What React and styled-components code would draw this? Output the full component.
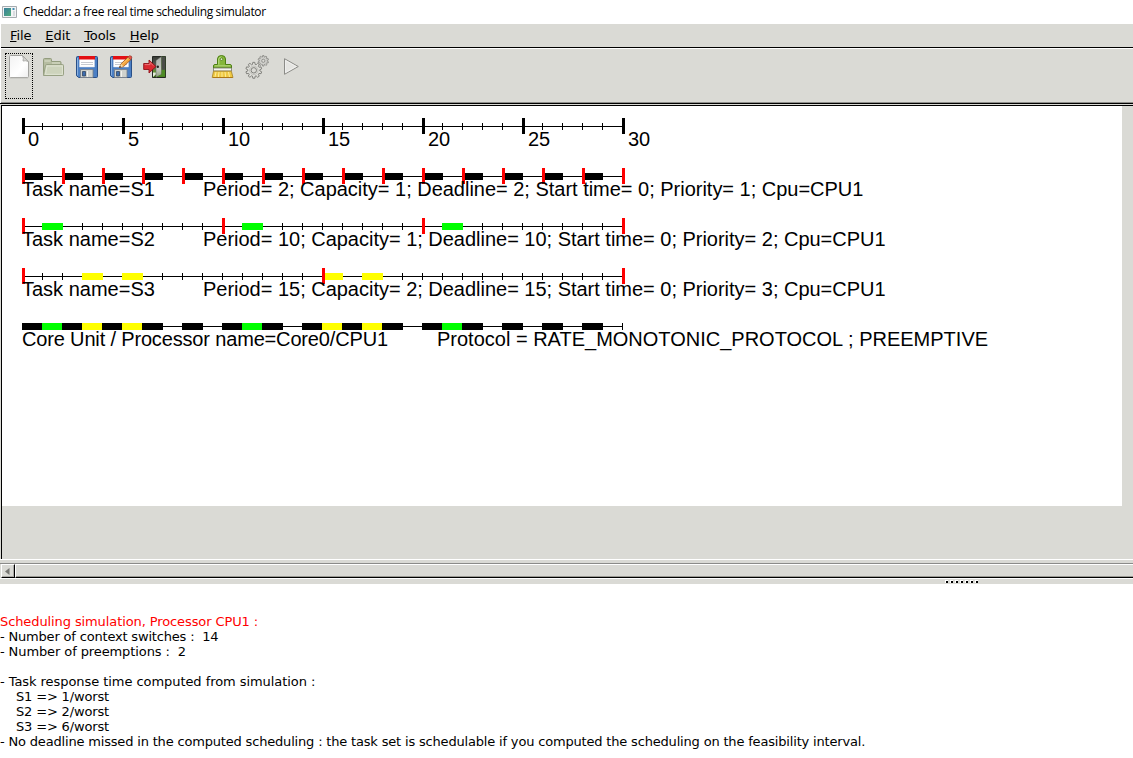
import React from 'react';
import styled, { createGlobalStyle } from 'styled-components';

const GREY = '#dadad5';

const GlobalStyle = createGlobalStyle`
  * { box-sizing: border-box; }
  body { margin: 0; background: #fff; overflow: hidden; }
  svg { display: block; }
`;

const Window = styled.div`
  width: 1133px;
  height: 758px;
  display: flex;
  flex-direction: column;
  overflow: hidden;
  background: #fff;
  color: #000;
  font: 13px "DejaVu Sans", sans-serif;
`;

const TitleBar = styled.header`
  height: 24px;
  flex: none;
  display: flex;
  align-items: center;
  gap: 6px;
  padding: 0 0 1px 2px;
  font: 12px "Open Sans", "Noto Sans", sans-serif;
  letter-spacing: -0.35px;
`;

const MenuBar = styled.nav`
  height: 24px;
  flex: none;
  display: flex;
  align-items: center;
  margin-left: 1px;
  padding: 0 0 0 9px;
  gap: 14px;
  background: ${GREY};
  border-bottom: 1px solid #000;
`;

const MenuItem = styled.span`
  line-height: 22px;
  letter-spacing: -0.1px;
  &::first-letter { text-decoration: underline; }
`;

const ToolBar = styled.div`
  height: 55px;
  flex: none;
  display: flex;
  align-items: flex-start;
  gap: 6px;
  margin-left: 1px;
  padding: 4px 0 0 4px;
  background: ${GREY};
  border-top: 1px solid #fff;
  border-bottom: 1px solid #8e8e8a;
`;

const ToolButton = styled.div`
  width: 28px;
  height: 46px;
  padding: 1px 1px 0;
  border: 1px dotted ${p => (p.$focused ? '#000' : 'transparent')};
`;

const ToolGap = styled.div`
  width: 28px;
`;

const Viewport = styled.main`
  height: 457px;
  flex: none;
  background: ${GREY};
  border-top: 1px solid #000;
  border-bottom: 1px solid #fff;
`;

const ViewportEdge = styled.div`
  height: 454px;
  margin: 1px 0 0 1px;
  border-top: 1px solid #000;
  border-left: 1px solid #000;
`;

const Canvas = styled.section`
  width: 1120px;
  height: 400px;
  padding: 12px 0 0 20px;
  background: #fff;
`;

const Row = styled.div`
  height: 50px;
`;

const Label = styled.div`
  display: flex;
  height: 22px;
  margin-top: -7px;
  font: 20px/22px "Liberation Sans", Arial, sans-serif;
  white-space: pre;
`;

const Name = styled.span`
  width: ${p => p.$width}px;
  flex: none;
  letter-spacing: ${p => p.$spacing || 0}px;
`;

const Details = styled.span`
  letter-spacing: ${p => p.$spacing || 0}px;
`;

const Mark = styled.span`
  width: 100px;
  flex: none;
  padding-left: 6px;
`;

const ScrollArea = styled.div`
  height: 19px;
  flex: none;
  padding-top: 3px;
  background: ${GREY};
`;

const ScrollTrack = styled.div`
  height: 16px;
  display: flex;
  border-top: 1px solid #8b8b89;
  border-bottom: 1px solid #fff;
`;

const ScrollArrow = styled.div`
  width: 14px;
  margin-left: 1px;
  padding: 3px 0 0 3px;
  border: 1px solid #fff;
  border-right: 1px solid #000;
  border-bottom: 1px solid #000;
  box-shadow: inset -1px -1px #aaa9a5;
`;

const ScrollThumb = styled.div`
  flex: 1;
  border: 1px solid #fff;
  border-right: 0;
  border-bottom: 1px solid #000;
  box-shadow: inset 0 -1px #9a9993;
`;

const Splitter = styled.div`
  height: 5px;
  flex: none;
  display: flex;
  gap: 2px;
  padding: 1px 0 0 945px;
  background: ${GREY};
`;

const Dot = styled.i`
  width: 3px;
  height: 3px;
  background: #000;
  border-left: 1px solid #fff;
  border-top: 1px solid #fff;
`;

const Log = styled.section`
  padding-top: 30px;
`;

const LogLine = styled.div`
  height: 15px;
  font: 13px/15px "DejaVu Sans", sans-serif;
  white-space: pre;
  color: ${p => (p.$heading ? '#f00' : '#000')};
  letter-spacing: ${p => p.$spacing || 0}px;
`;

const UNIT = 20;
const units = Array.from({ length: 31 }, (_, i) => i);

function Timeline({ major = [], color = '#f00', runs = [], ticks = true }) {
  return (
    <svg width="603" height="17" shapeRendering="crispEdges">
      <rect x="0" y="8" width="601" height="1" />
      {units.filter(i => ticks || i === 30).map(i => (
        <rect key={i} x={i * UNIT} y="5" width="1" height="7" />
      ))}
      {runs.map(([at, fill]) => (
        <rect key={at} x={at * UNIT} y="5" width="21" height="7" fill={fill} />
      ))}
      {major.map(i => (
        <rect key={i} x={i * UNIT} y="0" width="3" height="16" fill={color} />
      ))}
    </svg>
  );
}

const K = '#000';
const G = '#0f0';
const Y = '#ff0';
const even = units.filter(i => i % 2 === 0);

const tasks = [
  { name: 'S1', major: even, runs: even.slice(0, 15).map(i => [i, K]),
    text: 'Period= 2; Capacity= 1; Deadline= 2; Start time= 0; Priority= 1; Cpu=CPU1' },
  { name: 'S2', major: [0, 10, 20, 30], runs: [1, 11, 21].map(i => [i, G]),
    text: 'Period= 10; Capacity= 1; Deadline= 10; Start time= 0; Priority= 2; Cpu=CPU1' },
  { name: 'S3', major: [0, 15, 30], runs: [3, 5, 15, 17].map(i => [i, Y]),
    text: 'Period= 15; Capacity= 2; Deadline= 15; Start time= 0; Priority= 3; Cpu=CPU1' },
];

const coreRuns = [
  [0, K], [1, G], [2, K], [3, Y], [4, K], [5, Y], [6, K], [8, K], [10, K], [11, G], [12, K],
  [14, K], [15, Y], [16, K], [17, Y], [18, K], [20, K], [21, G], [22, K], [24, K], [26, K], [28, K],
];

const logLines = [
  ['- Number of context switches :  14', -0.18],
  ['- Number of preemptions :  2', -0.1],
  ['', 0],
  ['- Task response time computed from simulation :', -0.06],
  ['    S1 => 1/worst', -0.15],
  ['    S2 => 2/worst', -0.15],
  ['    S3 => 6/worst', -0.15],
  ['- No deadline missed in the computed scheduling : the task set is schedulable if you computed the scheduling on the feasibility interval.', -0.176],
];

const Icon = ({ children }) => <svg width="24" height="24" viewBox="0 0 24 24">{children}</svg>;

const NewIcon = () => (
  <Icon>
    <defs>
      <linearGradient id="paper" x1="0" y1="0" x2="1" y2="1">
        <stop offset="0" stopColor="#f2f2f2" /><stop offset=".6" stopColor="#fff" /><stop offset="1" stopColor="#eee" />
      </linearGradient>
    </defs>
    <path d="M3.500 .5h12l6 6v15q0 1-1 1h-17q-1 0-1-1v-20q0-1 1-1z" fill="url(#paper)" stroke="#a3a3a0" />
    <path d="M15.500 .8q1.400 2.600 .5 5.200q2.600-.8 5.400 .6z" fill="#d9d9d6" stroke="#a3a3a0" strokeWidth=".8" />
    <path d="M3 23.200h18" stroke="#c2c2bd" strokeWidth=".8" />
  </Icon>
);

const FolderIcon = () => (
  <Icon>
    <path d="M2.500 20V4.500q0-1 1-1h6q1 0 1 1v2h8.500q1 0 1 1V20z" fill="#b6bda1" stroke="#939c7e" />
    <path d="M3.500 6h6M11 8h8" stroke="#dce0cc" />
    <path d="M2.500 20.500L4.500 10.500q.2-1 1.200-1H21.500q1 0 1 1V19.500q0 1-1 1z" fill="#cdd3bc" stroke="#98a184" />
    <path d="M4.500 19.300L6 11h15.400v8.300z" fill="none" stroke="#e5e9d9" strokeWidth=".8" />
  </Icon>
);

const Floppy = () => (
  <>
    <path d="M2.500 1.500h19q1 0 1 1v19q0 1-1 1H3.700L1.500 20.700V2.500q0-1 1-1z" fill="#4b7fc4" stroke="#294f87" />
    <path d="M2.500 3v17.400" stroke="#88afdf" />
    <path d="M4.500 2h15v10h-15z" fill="#fff" stroke="#d8dce4" strokeWidth=".5" />
    <path d="M4 1h16v3.500H4z" fill="#e30f13" />
    <path d="M6 7.500h12M6 9.500h12" stroke="#b9bdc4" strokeWidth=".8" />
    <path d="M5.500 14.500h12.500v8H5.500z" fill="#d0d2cd" stroke="#777e87" strokeWidth=".8" />
    <path d="M7.500 16.500h3v4.500h-3z" fill="#3c6caf" stroke="#344762" strokeWidth=".8" />
    <path d="M12.500 16v6" stroke="#f2f2ef" />
  </>
);

const SaveIcon = () => <Icon><Floppy /></Icon>;

const SaveAsIcon = () => (
  <Icon>
    <Floppy />
    <path d="M10.500 12.500l1.600-3.800L19.400 1.800l2.600 2.700-7.500 7.100z" fill="#f3a43c" stroke="#98511c" strokeWidth=".8" />
    <path d="M18.800 2.200l1.500-1.400q2.500-.7 2.700 2.200l-1.400 1.500z" fill="#e95349" stroke="#99442e" strokeWidth=".6" />
    <path d="M12.200 9l2.100 2.200-3.800 1.300z" fill="#f3deb0" />
    <path d="M10.300 12.700l1.700-.6-1.100-1.100z" />
    <path d="M13.300 9l6.200-5.800" stroke="#ffd383" strokeWidth=".8" />
  </Icon>
);

const ExitIcon = () => (
  <Icon>
    <defs>
      <linearGradient id="outside" x1="0" y1="0" x2="0" y2="1">
        <stop offset="0" stopColor="#353833" /><stop offset=".5" stopColor="#62645b" /><stop offset=".7" stopColor="#659535" /><stop offset="1" stopColor="#376314" />
      </linearGradient>
      <linearGradient id="door" x1="0" y1="0" x2="0" y2="1">
        <stop offset="0" stopColor="#a9aca7" /><stop offset=".6" stopColor="#c6c8c2" /><stop offset="1" stopColor="#8a9d78" />
      </linearGradient>
    </defs>
    <path d="M9.500 1.500h13v21h-13z" fill="url(#outside)" stroke="#242722" />
    <path d="M10 22l5-4.500h-5z" fill="#e4ecd9" />
    <path d="M13 22.300V5.500L18.500 1.500v18z" fill="url(#door)" stroke="#5f635d" strokeWidth=".5" />
    <path d="M18.700 1.800h3.500v20H14l4.700-2.500z" fill="#4e8b25" />
    <path d="M18.700 1.800h3.500v13h-3.500z" fill="#4a4d48" />
    <circle cx="14.800" cy="11.800" r="1.200" fill="#222" />
    <path d="M.7 8.500H6V5l7 6.500L6 18v-3.500H.7z" fill="#d92a31" stroke="#8e1118" strokeWidth=".9" />
    <path d="M1.700 9.600H7V7.500l3.500 3.200" fill="none" stroke="#ef8585" strokeWidth=".8" />
  </Icon>
);

const BrushIcon = () => (
  <Icon>
    <path d="M6.500 9.500V4q0-3.500 4-3.500t4 3.500v5.500H19q1.500 0 1.500 1.500v2h-18v-2q0-1.500 1.500-1.500z" fill="#85b63b" stroke="#4c7f12" />
    <path d="M7.800 9.500V4q.2-2 2.600-2" fill="none" stroke="#bee28a" />
    <circle cx="10.500" cy="4.200" r="1.300" fill="#e5e9dc" stroke="#4c7f12" strokeWidth=".8" />
    <path d="M3.500 10.800h16" stroke="#b5d87c" />
    <path d="M2.500 13h18v3h-18z" fill="#f4f4f0" stroke="#777a6a" strokeWidth=".8" />
    <path d="M2.500 16.200h17.800l1.700 6.300H1.200z" fill="#efc943" stroke="#a4801f" strokeWidth=".8" />
    <path d="M5 17l-1 5M8 17l-.6 5M11 17v5M14 17l.7 5M17.500 17l1 5" stroke="#fff0a3" strokeWidth=".9" />
    <path d="M2 22.500h19.500" stroke="#ac7717" />
  </Icon>
);

function gear(cx, cy, outer, inner, teeth) {
  const pts = [];
  for (let i = 0; i < teeth; i += 1) {
    [[-0.36, inner], [-0.2, outer], [0.2, outer], [0.36, inner]].forEach(([o, r]) => {
      const a = ((i + o) / teeth) * Math.PI * 2 - Math.PI / 2;
      pts.push(`${(cx + Math.cos(a) * r).toFixed(2)} ${(cy + Math.sin(a) * r).toFixed(2)}`);
    });
  }
  return `M${pts.join('L')}Z`;
}

const GearsIcon = () => (
  <Icon>
    <path d={gear(18.3, 5.8, 5.3, 3.9, 10)} fill="#cfcfcb" stroke="#858581" strokeWidth=".8" />
    <circle cx="18.300" cy="5.800" r="1.600" fill={GREY} stroke="#858581" strokeWidth=".8" />
    <path d={gear(8.8, 15.3, 8, 6, 10)} fill="#deded9" stroke="#777773" strokeWidth=".9" />
    <circle cx="8.800" cy="15.300" r="4.200" fill="none" stroke="#b1b1ac" strokeWidth=".7" />
    <circle cx="8.800" cy="15.300" r="2.700" fill={GREY} stroke="#777773" strokeWidth=".9" />
  </Icon>
);

const PlayIcon = () => (
  <Icon>
    <path d="M5.500 3.700L19.300 11.500 5.500 19.300z" fill="#e5e5e2" stroke="#8c8c88" strokeLinejoin="round" />
    <path d="M6.600 5.600L17 11.500 6.600 17.400z" fill="none" stroke="#f5f5f3" strokeWidth=".7" />
  </Icon>
);

const AppIcon = () => (
  <svg width="15" height="12" viewBox="0 0 15 12">
    <defs>
      <linearGradient id="pane" x1="0" y1="0" x2="1" y2="1">
        <stop offset="0" stopColor="#397e9c" /><stop offset="1" stopColor="#4fac7b" />
      </linearGradient>
    </defs>
    <path d="M.5 .5h14v11H.5z" fill="#f3f4f5" stroke="#a5abaf" />
    <path d="M2 2h7v8H2z" fill="url(#pane)" />
    <path d="M10.500 2h2v2h-2z" fill="#438eb2" />
    <path d="M11 5h2v5h-2z" fill="#d8dcdf" />
  </svg>
);

export default function App() {
  return (
    <Window>
      <GlobalStyle />
      <TitleBar><AppIcon />Cheddar: a free real time scheduling simulator</TitleBar>
      <MenuBar>
        {['File', 'Edit', 'Tools', 'Help'].map(m => <MenuItem key={m}>{m}</MenuItem>)}
      </MenuBar>
      <ToolBar>
        <ToolButton $focused><NewIcon /></ToolButton>
        <ToolButton><FolderIcon /></ToolButton>
        <ToolButton><SaveIcon /></ToolButton>
        <ToolButton><SaveAsIcon /></ToolButton>
        <ToolButton><ExitIcon /></ToolButton>
        <ToolGap />
        <ToolButton><BrushIcon /></ToolButton>
        <ToolButton><GearsIcon /></ToolButton>
        <ToolButton><PlayIcon /></ToolButton>
      </ToolBar>
      <Viewport>
        <ViewportEdge>
          <Canvas>
            <Row>
              <Timeline major={[0, 5, 10, 15, 20, 25, 30]} color="#000" />
              <Label>{[0, 5, 10, 15, 20, 25, 30].map(n => <Mark key={n}>{n}</Mark>)}</Label>
            </Row>
            {tasks.map(t => (
              <Row key={t.name}>
                <Timeline major={t.major} runs={t.runs} />
                <Label>
                  <Name $width={181}>Task name={t.name}</Name>
                  <Details $spacing={-0.015}>{t.text}</Details>
                </Label>
              </Row>
            ))}
            <Row>
              <Timeline runs={coreRuns} ticks={false} />
              <Label>
                <Name $width={415} $spacing={-0.16}>Core Unit / Processor name=Core0/CPU1</Name>
                <Details>Protocol = RATE_MONOTONIC_PROTOCOL ; PREEMPTIVE</Details>
              </Label>
            </Row>
          </Canvas>
        </ViewportEdge>
      </Viewport>
      <ScrollArea>
        <ScrollTrack>
          <ScrollArrow>
            <svg width="5" height="7"><path d="M4.500 0v7L0 3.500z" fill="#777773" /></svg>
          </ScrollArrow>
          <ScrollThumb />
        </ScrollTrack>
      </ScrollArea>
      <Splitter>{[0, 1, 2, 3, 4, 5, 6].map(i => <Dot key={i} />)}</Splitter>
      <Log>
        <LogLine $heading $spacing={-0.1}>Scheduling simulation, Processor CPU1 :</LogLine>
        {logLines.map(([text, spacing], i) => <LogLine key={i} $spacing={spacing}>{text}</LogLine>)}
      </Log>
    </Window>
  );
}
